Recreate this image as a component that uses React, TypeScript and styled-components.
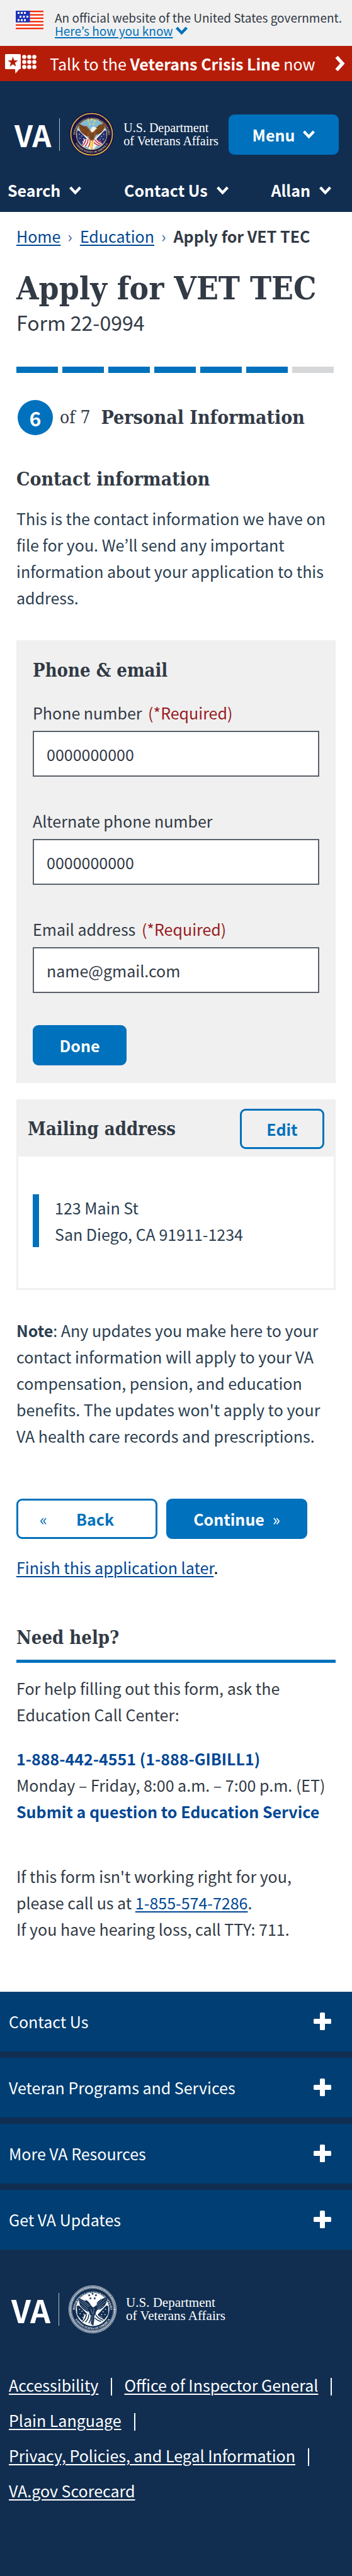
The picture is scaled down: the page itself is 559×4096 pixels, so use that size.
import React from 'react';
import styled, { createGlobalStyle } from 'styled-components';

const sans = '"Noto Sans CJK KR", "Noto Sans", sans-serif';
const slab = '"DejaVu Serif Condensed", "DejaVu Serif", serif';

const GlobalStyle = createGlobalStyle`
  *, *::before, *::after { box-sizing: border-box; }
  body {
    margin: 0;
    background: #fff;
    color: #323a45;
    font-family: ${sans};
    font-size: 25px;
    line-height: 42px;
  }
  h1, h2, h3, p, ul, ol { margin: 0; padding: 0; }
  ul, ol { list-style: none; }
  button { font-family: inherit; cursor: pointer; }
  svg { display: block; flex: none; }
`;

/* ---------- official banner ---------- */

const GovBanner = styled.div`
  display: flex;
  align-items: flex-start;
  gap: 18px;
  padding: 17px 10px 8px 25px;
  min-height: 73px;
  background: #f0f0f0;
  font-size: 19px;
  line-height: 21px;
  white-space: nowrap;
`;

const GovToggle = styled.button`
  display: flex;
  align-items: center;
  gap: 4px;
  padding: 0;
  border: 0;
  background: none;
  color: #0071bc;
  font-size: 19px;
  line-height: 21px;

  span {
    text-decoration: underline;
    text-decoration-thickness: 2px;
    text-underline-offset: 2px;
  }
`;

/* ---------- crisis line ---------- */

const CrisisBar = styled.a`
  display: flex;
  align-items: center;
  height: 56px;
  padding: 0 11px 0 8px;
  background: #b51d09;
  color: #fff;
  text-decoration: none;
  line-height: 56px;
  white-space: nowrap;
`;

const CrisisText = styled.span`
  flex: 1;
  padding-left: 21px;
  font-size: 25px;
`;

/* ---------- header ---------- */

const Header = styled.header`
  background: #112e51;
  color: #fff;
  padding: 49px 0 0;
`;

const BrandRow = styled.div`
  display: flex;
  align-items: center;
  justify-content: space-between;
  padding: 0 21px 0 23px;
`;

const Brand = styled.a`
  display: flex;
  align-items: center;
  color: #fff;
  text-decoration: none;
`;

const VaMark = styled.span<{ $size: number }>`
  font-size: ${(p) => p.$size}px;
  font-weight: 700;
  line-height: 50px;
`;

const BrandRule = styled.span`
  width: 1px;
  height: 52px;
  margin: 0 15px 0 13px;
  background: #b8c0ca;
`;

const BrandName = styled.span<{ $size: number }>`
  margin-left: 15px;
  font-family: "Liberation Serif", serif;
  font-size: ${(p) => p.$size}px;
  line-height: 21px;
  white-space: nowrap;
`;

const Button = styled.button<{ $outline?: boolean; $width: number }>`
  display: flex;
  align-items: center;
  justify-content: center;
  gap: 13px;
  width: ${(p) => p.$width}px;
  height: 64px;
  padding: 0;
  border: 3px solid #0071bc;
  border-radius: 9px;
  background: ${(p) => (p.$outline ? 'transparent' : '#0071bc')};
  color: ${(p) => (p.$outline ? '#0071bc' : '#fff')};
  font-size: 25px;
  font-weight: 700;
  line-height: 42px;
  white-space: nowrap;
`;

const NavRow = styled.nav`
  display: flex;
  justify-content: space-between;
  padding: 32px 33px 14px 12px;
`;

const NavButton = styled.button`
  display: flex;
  align-items: center;
  gap: 14px;
  padding: 0;
  border: 0;
  background: none;
  color: #fff;
  font-size: 25px;
  font-weight: 700;
  line-height: 42px;
  white-space: nowrap;
`;

/* ---------- content ---------- */

const Content = styled.main`
  padding: 17px 26px 79px;
`;

const Link = styled.a`
  color: #004795;
  text-decoration: underline;
  text-decoration-thickness: 2px;
  text-underline-offset: 3px;
`;

const BoldLink = styled.a`
  color: #004795;
  font-weight: 700;
  text-decoration: none;
`;

const Breadcrumb = styled.ol`
  display: flex;
  gap: 12px;
  white-space: nowrap;

  li { display: flex; gap: 11px; }
  li > span { color: #3e6fa8; }
`;

const Title = styled.h1`
  margin-top: 36px;
  font-family: ${slab};
  font-size: 51px;
  line-height: 52px;
  white-space: nowrap;
`;

const Subtitle = styled.p`
  margin-top: 8px;
  font-size: 32px;
  line-height: 40px;
`;

const Progress = styled.div`
  display: flex;
  gap: 7px;
  margin-top: 51px;
  padding-right: 3px;
`;

const Segment = styled.span<{ $done: boolean }>`
  flex: 1;
  height: 10px;
  background: ${(p) => (p.$done ? '#0071bc' : '#d6d7d9')};
`;

const StepRow = styled.div`
  display: flex;
  align-items: center;
  margin-top: 43px;
`;

const StepNumber = styled.span`
  width: 56px;
  height: 56px;
  margin-left: 2px;
  border-radius: 50%;
  background: #0071bc;
  color: #fff;
  font-size: 32px;
  font-weight: 700;
  line-height: 56px;
  text-align: center;
`;

const StepCount = styled.span`
  margin: 0 17px 0 11px;
  font-family: ${slab};
  font-size: 28px;
`;

const Heading = styled.h2<{ $top?: number; $large?: boolean }>`
  margin-top: ${(p) => p.$top ?? 0}px;
  font-family: ${slab};
  font-size: ${(p) => (p.$large ? 30 : 29)}px;
  line-height: 36px;
  white-space: nowrap;
`;

const Paragraph = styled.p<{ $top: number; $tone?: string }>`
  margin-top: ${(p) => p.$top}px;
  color: ${(p) => p.$tone ?? '#323a45'};
`;

const EditCard = styled.form`
  margin-top: 47px;
  padding: 30px 26px 28px;
  background: #f0f0f0;
`;

const Field = styled.div<{ $top: number }>`
  display: flex;
  flex-direction: column;
  gap: 8px;
  margin-top: ${(p) => p.$top}px;

  label span { margin-left: 4px; color: #981b1e; }
`;

const TextInput = styled.input`
  width: 100%;
  height: 73px;
  padding: 0 20px;
  border: 2px solid #5b616b;
  border-radius: 0;
  background: #fff;
  color: #323a45;
  font-family: inherit;
  font-size: 25px;
`;

const FormActions = styled.div`
  margin-top: 51px;
`;

const AddressCard = styled.section`
  margin-top: 26px;
  border: 3px solid #f0f0f0;
`;

const AddressHeader = styled.div`
  display: flex;
  align-items: center;
  justify-content: space-between;
  height: 88px;
  padding: 0 15px 0 15px;
  background: #f0f0f0;
`;

const AddressBody = styled.div`
  padding: 60px 23px 65px;
`;

const Address = styled.address`
  padding-left: 25px;
  border-left: 10px solid #0071bc;
  color: #2b3e50;
  font-style: normal;
`;

const ButtonRow = styled.div`
  display: flex;
  gap: 14px;
  margin-top: 79px;
`;

const Guillemet = styled.span<{ $wide?: boolean }>`
  margin-right: ${(p) => (p.$wide ? 33 : 0)}px;
  font-weight: 400;
`;

const BackLabel = styled.span`
  margin-right: 32px;
`;

const HelpHeading = styled(Heading)`
  padding-bottom: 17px;
  border-bottom: 5px solid #0071bc;
`;

/* ---------- footer ---------- */

const Footer = styled.footer`
  background: #112e51;
  color: #fff;
  padding-bottom: 108px;
`;

const Accordion = styled.ul`
  display: flex;
  flex-direction: column;
  gap: 10px;
`;

const AccordionButton = styled.button`
  display: flex;
  align-items: center;
  justify-content: space-between;
  width: 100%;
  height: 95px;
  padding: 0 33px 2px 14px;
  border: 0;
  background: #003e73;
  color: #fff;
  font-size: 25px;
  line-height: 42px;
  text-align: left;
`;

const FooterBrand = styled.div`
  display: flex;
  padding: 57px 18px 54px;
`;

const FooterLinks = styled.ul`
  display: flex;
  flex-wrap: wrap;
  column-gap: 19px;
  padding: 0 14px;
  line-height: 56px;
  white-space: nowrap;

  li { display: flex; align-items: center; }
  a {
    color: #fff;
    text-decoration: underline;
    text-decoration-thickness: 2px;
    text-underline-offset: 3px;
  }
  li:not(:last-child)::after {
    content: '';
    width: 2px;
    height: 28px;
    margin: 6px 0 0 20px;
    background: #fff;
  }
`;

/* ---------- drawings ---------- */

const Chevron = () => (
  <svg width="19" height="19" viewBox="0 0 19 19" aria-hidden="true">
    <path d="M1.6 5 L9.5 13.4 L17.4 5" fill="none" stroke="currentColor" strokeWidth="4.4" />
  </svg>
);

const Plus = () => (
  <svg width="28" height="28" viewBox="0 0 28 28" aria-hidden="true">
    <rect x="10" y="0" width="8" height="28" rx="1.5" fill="#fff" />
    <rect x="0" y="10" width="28" height="8" rx="1.5" fill="#fff" />
  </svg>
);

const Flag = () => (
  <svg width="44" height="30" viewBox="0 0 44 30" aria-hidden="true">
    <rect width="44" height="30" fill="#fff" />
    {[0, 5.4, 10.8, 16.2, 21.6, 27].map((y) => (
      <rect key={y} y={y} width="44" height="2.4" fill="#f12c0a" />
    ))}
    <rect width="22.5" height="18.5" fill="#1f33b8" />
    {[[3, 2], [8, 2], [13, 2], [6, 8], [11.5, 8], [17, 8], [3, 13.5], [8, 13.5], [13, 13.5]].map(([x, y]) => (
      <rect key={`${x}-${y}`} x={x} y={y} width="3" height="3" fill="#fff" />
    ))}
  </svg>
);

const CrisisIcon = () => (
  <svg width="50" height="31" viewBox="0 0 50 31" aria-hidden="true">
    <path d="M1.5 0H23.500A1.500 1.500 0 0 1 25 1.500V22.500A1.500 1.500 0 0 1 23.500 24H22.500L16.500 31L16 24H1.500A1.500 1.500 0 0 1 0 22.500V1.500A1.500 1.500 0 0 1 1.500 0Z" fill="#fff" />
    <polygon points={star(12.5, 12.8, 8.6)} fill="#b51d09" />
    {[30.5, 38.5, 46.5].map((x) => [4.5, 12.5, 20.5].map((y) => (
      <circle key={`${x}-${y}`} cx={x} cy={y} r="3.300" fill="#fff" />
    )))}
  </svg>
);

const CrisisArrow = () => (
  <svg width="16" height="26" viewBox="0 0 16 26" aria-hidden="true">
    <path d="M2.500 2.500L11.800 13L2.500 23.500" fill="none" stroke="#fff" strokeWidth="5.500" />
  </svg>
);

function star(cx: number, cy: number, r: number) {
  return Array.from({ length: 10 }, (_, i) => {
    const a = (Math.PI / 5) * i - Math.PI / 2;
    const d = i % 2 ? r * 0.4 : r;
    return `${(cx + d * Math.cos(a)).toFixed(2)},${(cy + d * Math.sin(a)).toFixed(2)}`;
  }).join(' ');
}

type SealPalette = {
  rim: string; band: string; text: string; field: string; star: string;
  wing: string; wingDark: string; head: string; flag: string; stripe: string; stripeBack: string;
};

const colourSeal: SealPalette = {
  rim: '#e9c046', band: '#1b1446', text: '#d9c98c', field: '#7fbcd8', star: '#f2d84a',
  wing: '#8a5024', wingDark: '#4b2812', head: '#f3efe6', flag: '#27306f', stripe: '#c22637', stripeBack: '#f6eff0',
};

const monoSeal: SealPalette = {
  rim: '#fff', band: '#112e51', text: '#fff', field: '#fff', star: '#112e51',
  wing: '#112e51', wingDark: '#7f90a6', head: '#fff', flag: '#112e51', stripe: '#112e51', stripeBack: '#fff',
};

const Seal = ({ id, size, palette: c, rope }: { id: string; size: number; palette: SealPalette; rope?: boolean }) => (
  <svg width={size} height={size} viewBox="0 0 100 100" role="img" aria-label="Seal of the Department of Veterans Affairs">
    <defs>
      <path id={`${id}-top`} d="M12.500 54A37.500 37.500 0 1 1 87.500 54" />
      <path id={`${id}-bottom`} d="M8.600 57A42 42 0 0 0 91.400 57" />
      <clipPath id={`${id}-field`}><circle cx="50" cy="50" r="34" /></clipPath>
    </defs>
    <circle cx="50" cy="50" r="49.500" fill={c.band} stroke={rope ? c.rim : c.band} strokeWidth="1" />
    <circle
      cx="50" cy="50" r="46.500" fill="none" stroke={c.rim}
      strokeWidth={rope ? 3.2 : 2.2} strokeDasharray={rope ? '1.800 1.100' : undefined}
    />
    {rope && <circle cx="50" cy="50" r="44" fill="none" stroke={c.rim} strokeWidth="0.700" />}
    <circle cx="50" cy="50" r="34.500" fill={c.field} stroke={c.rim} strokeWidth="1" />
    <text fill={c.text} fontFamily="Liberation Serif, serif" fontWeight="700" fontSize="6">
      <textPath href={`#${id}-top`} startOffset="50%" textAnchor="middle">DEPARTMENT OF VETERANS AFFAIRS</textPath>
    </text>
    <text fill={c.text} fontFamily="Liberation Serif, serif" fontWeight="700" fontSize="6">
      <textPath href={`#${id}-bottom`} startOffset="50%" textAnchor="middle">UNITED STATES OF AMERICA</textPath>
    </text>
    {[[50, 17.5], [43, 20.5], [57, 20.5], [45.5, 27], [54.5, 27]].map(([x, y]) => (
      <polygon key={`${x}-${y}`} points={star(x, y, 3.2)} fill={c.star} />
    ))}
    <g clipPath={`url(#${id}-field)`}>
      <path d="M17 43L25 41L45 60L38 72L27 73L18 62Z" fill={c.flag} />
      <path d="M83 43L75 41L57 60L64 72L75 71L83 60Z" fill={c.flag} />
      {[[23, 50], [28, 54], [24, 59], [32, 60], [30, 67], [77, 50], [72, 55], [76, 61], [69, 61], [70, 68]].map(([x, y]) => (
        <circle key={`${x}-${y}`} cx={x} cy={y} r="1.100" fill={c.head} />
      ))}
      <path d="M19 39L21 38L49 64L46 67Z" fill={c.head} />
      <path d="M81 39L79 38L52 64L55 67Z" fill={c.head} />
      <path d="M33 61L46 60L58 60L70 66L74 74L62 75L54 84H46L39 77L28 78Z" fill={c.stripeBack} />
      <g fill="none" stroke={c.stripe} strokeWidth="2">
        <path d="M37 61Q36 70 29 76" />
        <path d="M42 61Q42 71 35 77" />
        <path d="M47 62Q47 72 42 79" />
        <path d="M53 63L50 84" />
        <path d="M57 62Q62 70 72 73" />
        <path d="M55 68Q60 74 68 75" />
        <path d="M62 62Q66 67 73 69" />
      </g>
      <path d="M47 66L51 62L54 68L52 83L46 81Z" fill={c.star} opacity="0.85" />
    </g>
    <path
      d="M21 26L27 29L33 32L38 31L43 36L47 42L52 43L56 40L61 34L67 29L73 27L81 24L80 31L79 36L76 41L73 45L69 48L65 50L60 51L57 56L56 62L50 64L44 61L43 55L38 54L33 51L28 47L24 42L22 35Z"
      fill={c.wing}
    />
    <g fill="none" stroke={c.wingDark} strokeWidth="1.300">
      <path d="M22 28L42 45" />
      <path d="M23 34L41 49" />
      <path d="M26 42L41 53" />
      <path d="M30 31L45 44" />
      <path d="M79 27L60 44" />
      <path d="M79 33L60 48" />
      <path d="M74 42L61 50" />
      <path d="M70 29L57 43" />
      <path d="M46 48L50 61" />
      <path d="M53 47L52 60" />
    </g>
    <path d="M50 35Q55 31 59 35L62 37L59 39L56 43L51 46L47 42Z" fill={c.head} />
    <path d="M59 35L63 38L59 38Z" fill={c.star} />
  </svg>
);

const SiteBrand = ({ id, palette, mark, name, seal, rope }: {
  id: string; palette: SealPalette; mark: number; name: number; seal: number; rope?: boolean;
}) => (
  <Brand href="#">
    <VaMark $size={mark}>VA</VaMark>
    <BrandRule />
    <Seal id={id} size={seal} palette={palette} rope={rope} />
    <BrandName $size={name}>U.S. Department<br />of Veterans Affairs</BrandName>
  </Brand>
);

/* ---------- page ---------- */

const fields = [
  { id: 'phone', label: 'Phone number', required: true, value: '0000000000', type: 'tel' },
  { id: 'alt-phone', label: 'Alternate phone number', required: false, value: '0000000000', type: 'tel' },
  { id: 'email', label: 'Email address', required: true, value: 'name@gmail.com', type: 'email' },
];

const footerSections = ['Contact Us', 'Veteran Programs and Services', 'More VA Resources', 'Get VA Updates'];
const footerLinks = [
  'Accessibility', 'Office of Inspector General', 'Plain Language',
  'Privacy, Policies, and Legal Information', 'VA.gov Scorecard',
];

export default function App() {
  return (
    <>
      <GlobalStyle />
      <GovBanner>
        <Flag />
        <div>
          An official website of the United States government.
          <GovToggle type="button">
            <span>Here’s how you know</span>
            <Chevron />
          </GovToggle>
        </div>
      </GovBanner>
      <CrisisBar href="#">
        <CrisisIcon />
        <CrisisText>Talk to the <b>Veterans Crisis Line</b> now</CrisisText>
        <CrisisArrow />
      </CrisisBar>

      <Header>
        <BrandRow>
          <SiteBrand id="header-seal" palette={colourSeal} mark={47} name={20} seal={71} />
          <Button type="button" $width={175}>Menu <Chevron /></Button>
        </BrandRow>
        <NavRow>
          {['Search', 'Contact Us', 'Allan'].map((item) => (
            <NavButton key={item} type="button">{item}<Chevron /></NavButton>
          ))}
        </NavRow>
      </Header>

      <Content>
        <nav aria-label="Breadcrumb">
          <Breadcrumb>
            <li><Link href="#">Home</Link><span>›</span></li>
            <li><Link href="#">Education</Link><span>›</span></li>
            <li><b>Apply for VET TEC</b></li>
          </Breadcrumb>
        </nav>
        <Title>Apply for VET TEC</Title>
        <Subtitle>Form 22-0994</Subtitle>

        <Progress>
          {[1, 2, 3, 4, 5, 6, 7].map((n) => <Segment key={n} $done={n <= 6} />)}
        </Progress>
        <StepRow>
          <StepNumber>6</StepNumber>
          <StepCount>of 7</StepCount>
          <Heading $large>Personal Information</Heading>
        </StepRow>

        <Heading $large $top={52}>Contact information</Heading>
        <Paragraph $top={23} $tone="#2b3e50">
          This is the contact information we have on file for you. We’ll send any important
          information about your application to this address.
        </Paragraph>

        <EditCard onSubmit={(e) => e.preventDefault()}>
          <Heading>Phone &amp; email</Heading>
          {fields.map((f, i) => (
            <Field key={f.id} $top={i ? 49 : 28}>
              <label htmlFor={f.id}>{f.label} {f.required && <span>(*Required)</span>}</label>
              <TextInput id={f.id} type={f.type} defaultValue={f.value} />
            </Field>
          ))}
          <FormActions>
            <Button type="submit" $width={149}>Done</Button>
          </FormActions>
        </EditCard>

        <AddressCard>
          <AddressHeader>
            <Heading>Mailing address</Heading>
            <Button type="button" $outline $width={134}>Edit</Button>
          </AddressHeader>
          <AddressBody>
            <Address>123 Main St<br />San Diego, CA 91911-1234</Address>
          </AddressBody>
        </AddressCard>

        <Paragraph $top={43} $tone="#2b3e50">
          <b>Note</b>: Any updates you make here to your contact information will apply to your VA
          compensation, pension, and education benefits. The updates won't apply to your VA health
          care records and prescriptions.
        </Paragraph>

        <ButtonRow>
          <Button type="button" $outline $width={224}>
            <Guillemet $wide>«</Guillemet><BackLabel>Back</BackLabel>
          </Button>
          <Button type="button" $width={224}>
            Continue<Guillemet>»</Guillemet>
          </Button>
        </ButtonRow>
        <Paragraph $top={24} $tone="#000"><Link href="#">Finish this application later</Link>.</Paragraph>

        <HelpHeading $top={73}>Need help?</HelpHeading>
        <Paragraph $top={19}>For help filling out this form, ask the Education Call Center:</Paragraph>
        <Paragraph $top={28}>
          <BoldLink href="#">1-888-442-4551 (1-888-GIBILL1)</BoldLink><br />
          Monday – Friday, 8:00 a.m. – 7:00 p.m. (ET)<br />
          <BoldLink href="#">Submit a question to Education Service</BoldLink>
        </Paragraph>
        <Paragraph $top={61}>
          If this form isn't working right for you, please call us at <Link href="#">1-855-574-7286</Link>.<br />
          If you have hearing loss, call TTY: 711.
        </Paragraph>
      </Content>

      <Footer>
        <Accordion>
          {footerSections.map((s) => (
            <li key={s}><AccordionButton type="button" aria-expanded="false">{s}<Plus /></AccordionButton></li>
          ))}
        </Accordion>
        <FooterBrand>
          <SiteBrand id="footer-seal" palette={monoSeal} mark={50} name={21} seal={76} rope />
        </FooterBrand>
        <FooterLinks>
          {footerLinks.map((l) => <li key={l}><a href="#">{l}</a></li>)}
        </FooterLinks>
      </Footer>
    </>
  );
}
